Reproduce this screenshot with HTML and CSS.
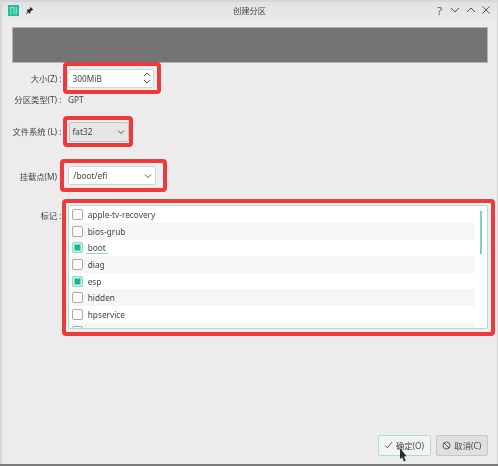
FILE: index.html
```html
<!DOCTYPE html>
<html lang="en">
<head>
  <meta charset="UTF-8">
  <title>创建分区</title>
  <link rel="stylesheet" href="styles.css">
</head>
<body>

<div class="dialog">
  <div class="titlebar">
    <div class="title-left">
      <svg class="logo" width="11" height="11" viewBox="0 0 11 11">
        <rect width="11" height="11" fill="#1fbf9c"/>
        <path d="M2 2h4.500v7.500H5.200V3.300H3.300v6.200H2zM7.600 2H9v7.500H7.600z" fill="#7fdcc6"/>
      </svg>
      <svg class="pin" width="9" height="9" viewBox="0 0 10 10">
        <path d="M5.800 .8l3.400 3.400-1 .6-.6-.2-1.700 1.700.2 1.600-.8.7L1.900 4.700l.7-.8 1.600.2 1.700-1.700-.2-.6zM3.200 6l.9.900L1 9.200.7 9z" fill="#222"/>
      </svg>
    </div>
    <div class="title">创建分区</div>
    <div class="title-buttons">
      <span class="help">?</span>
      <svg width="10" height="10" viewBox="0 0 10 10"><path d="M1 3l4 4 4-4" class="stroke"/></svg>
      <svg width="10" height="10" viewBox="0 0 10 10"><path d="M1 7l4-4 4 4" class="stroke"/></svg>
      <svg width="10" height="10" viewBox="0 0 10 10"><path d="M1.500 1.500l7 7M8.500 1.500l-7 7" class="stroke"/></svg>
    </div>
  </div>

  <div class="banner"></div>

  <div class="row row-size">
    <label class="field-label">大小(Z) :</label>
    <div class="mark mark-size">
      <div class="input input-size">
        <span>300MiB</span>
        <svg width="8" height="14" viewBox="0 0 8 14"><path d="M1 5l3-3 3 3M1 9l3 3 3-3" class="stroke"/></svg>
      </div>
    </div>
  </div>

  <div class="row row-type">
    <label class="field-label">分区类型(T) :</label>
    <span class="plain">GPT</span>
  </div>

  <div class="row row-fs">
    <label class="field-label">文件系统 (L) :</label>
    <div class="mark mark-fs">
      <div class="input combo">
        <span>fat32</span>
        <svg width="8" height="6" viewBox="0 0 8 6"><path d="M1 1.500l3 3 3-3" class="stroke"/></svg>
      </div>
    </div>
  </div>

  <div class="row row-mount">
    <label class="field-label">挂载点(M) :</label>
    <div class="mark mark-mount">
      <div class="input input-mount">
        <span>/boot/efi</span>
        <svg width="8" height="6" viewBox="0 0 8 6"><path d="M1 1.500l3 3 3-3" class="stroke"/></svg>
      </div>
    </div>
  </div>

  <div class="row row-flags">
    <label class="field-label">标记 :</label>
    <div class="mark mark-list">
      <div class="flag-list">
        <div class="flag"><span class="check"></span>apple-tv-recovery</div>
        <div class="flag alt"><span class="check"></span>bios-grub</div>
        <div class="flag"><span class="check on"></span><span class="focused">boot</span></div>
        <div class="flag alt"><span class="check"></span>diag</div>
        <div class="flag"><span class="check on"></span>esp</div>
        <div class="flag alt"><span class="check"></span>hidden</div>
        <div class="flag"><span class="check"></span>hpservice</div>
        <div class="flag alt"><span class="check"></span></div>
        <div class="scrollbar"></div>
      </div>
    </div>
  </div>

  <div class="actions">
    <button class="btn btn-ok">
      <svg width="9" height="8" viewBox="0 0 9 8"><path d="M1 4.500l2.300 2.300L8 1.200" class="stroke"/></svg>
      确定(O)
    </button>
    <button class="btn">
      <svg width="9" height="9" viewBox="0 0 9 9"><circle cx="4.500" cy="4.500" r="3.500" class="stroke"/><path d="M2 2l5 5" class="stroke"/></svg>
      取消(C)
    </button>
  </div>

  <svg class="cursor" width="9" height="14" viewBox="0 0 10 16">
    <path d="M1 0l7.500 9.500-3 .3 2 4.700-2 1-2-4.800L1 12.500z" fill="#2b2b2b"/>
  </svg>
</div>

</body>
</html>
```

FILE: styles.css
```css
html, body {
  margin: 0;
  height: 100%;
}
body {
  background: linear-gradient(#d6d6d6 0, #d6d6d6 464px, #7c7c7c 464px);
  font-family: "Noto Sans", "Noto Sans CJK SC", sans-serif;
  font-size: 8.300px;
  color: #444;
  overflow: hidden;
}
.dialog {
  position: relative;
  display: flex;
  flex-direction: column;
  box-sizing: border-box;
  width: 495px;
  height: 462px;
  margin: 2px 0 0 2px;
  background: #ececec;
  padding: 0 9px 8.300px 9.500px;
  filter: blur(0.4px);
}
.titlebar {
  display: flex;
  align-items: center;
  height: 16px;
  margin: 0 -9px 9px -9.500px;
  padding: 0 6px;
  background: linear-gradient(#e2e2e2, #e9e9e9);
}
.title-left, .title-buttons {
  display: flex;
  flex: 1 1 0;
  align-items: center;
}
.title-left {
  gap: 6px;
}
.title-buttons {
  justify-content: flex-end;
  gap: 5.500px;
}
.help {
  font-size: 11px;
  width: 10px;
  text-align: center;
  color: #555;
}
.stroke {
  fill: none;
  stroke: #555;
  stroke-width: 1;
}
.banner {
  box-sizing: border-box;
  height: 36px;
  background: #747474;
  border: 1px solid #b4b4b4;
}
.row {
  display: flex;
  align-items: center;
}
.field-label {
  flex: none;
  width: 50px;
  text-align: right;
  white-space: nowrap;
}
.mark {
  border: 4px solid #ee3a3a;
  border-radius: 4px;
  background: #eee;
}
.mark-size {
  margin-left: 1px;
  padding: 2.500px 3.700px 2px 0;
}
.mark-fs {
  margin-left: 1px;
  padding: 2px 0.500px 1.500px 2px;
}
.mark-mount {
  margin-left: -1.500px;
  padding: 3px 7px 3px 4.300px;
}
.input {
  display: flex;
  align-items: center;
  justify-content: space-between;
  box-sizing: border-box;
  height: 19px;
  background: #fff;
  border: 1px solid #d4d4d4;
  border-radius: 2px;
}
.input-size {
  width: 87.300px;
  padding: 0 2px 0 5px;
}
.combo {
  width: 60px;
  height: 20px;
  padding: 0 3px;
  background: #e6e6e6;
  border-color: #c4c4c4;
}
.input-mount {
  width: 87.400px;
  padding: 0 2.400px 0 4px;
}
.row-size {
  margin-top: -1px;
}
.row-type {
  height: 12px;
  margin-top: -0.500px;
}
.plain {
  margin-left: 6.500px;
}
.row-fs {
  margin-top: 10.500px;
}
.row-mount {
  margin-top: 12px;
}
.row-flags {
  align-items: flex-start;
  margin-top: 6.500px;
}
.row-flags .field-label {
  margin-top: 10px;
}
.mark-list {
  flex: 1;
  margin-left: 0.500px;
  margin-right: -7px;
  padding: 2px 3px 3.700px 2px;
}
.flag-list {
  position: relative;
  box-sizing: border-box;
  height: 124px;
  padding: 0.700px 12px 0 1px;
  overflow: hidden;
  background: #fff;
  border: 1px solid #a9e0d2;
  border-radius: 2px;
}
.flag {
  display: flex;
  align-items: center;
  height: 16.670px;
  padding-left: 2px;
  white-space: nowrap;
}
.flag.alt {
  background: #f6f6f4;
}
.check {
  flex: none;
  box-sizing: border-box;
  width: 11px;
  height: 11px;
  margin-right: 4.700px;
  background: #fff;
  border: 1px solid #a8a8a8;
  border-radius: 2px;
}
.check.on {
  background: #14b896;
  border-color: #8adcc8;
  box-shadow: inset 0 0 0 1.500px #d0f2ea;
}
.focused {
  line-height: 11px;
  box-shadow: 0 1px 0 #8adcc8;
  margin-left: -2px;
  padding: 0 2px;
}
.scrollbar {
  position: absolute;
  top: 5px;
  right: 5.500px;
  width: 2px;
  height: 43px;
  background: #7fcfbc;
}
.actions {
  display: flex;
  justify-content: flex-end;
  gap: 5px;
  margin-top: auto;
}
.btn {
  display: flex;
  align-items: center;
  justify-content: center;
  gap: 3px;
  box-sizing: border-box;
  width: 52.500px;
  height: 21px;
  padding: 0;
  font: inherit;
  color: #444;
  background: #e0e0e0;
  border: 1px solid #c6c6c6;
  border-radius: 2px;
}
.btn-ok {
  width: 53px;
  background: #f2f4f3;
  border-color: #a9e0d2;
}
.cursor {
  position: absolute;
  left: 397px;
  top: 446px;
}
```
